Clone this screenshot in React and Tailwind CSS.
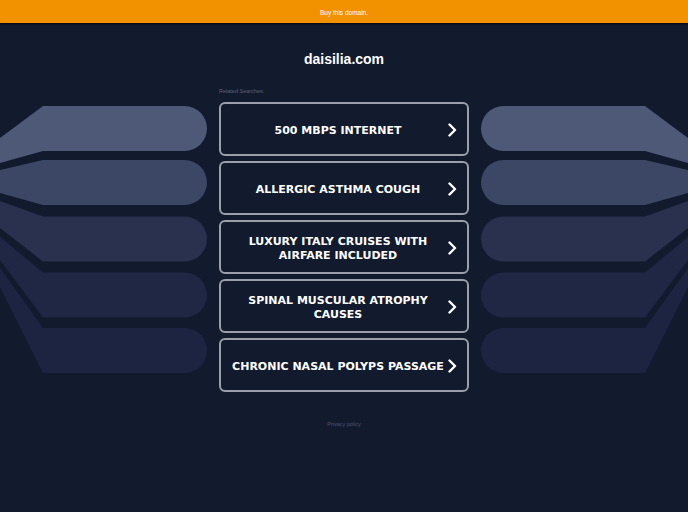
import React from "react";

const items = [
  ["500 MBPS INTERNET"],
  ["ALLERGIC ASTHMA COUGH"],
  ["LUXURY ITALY CRUISES WITH", "AIRFARE INCLUDED"],
  ["SPINAL MUSCULAR ATROPHY", "CAUSES"],
  ["CHRONIC NASAL POLYPS PASSAGE"],
];

const bars = [
  { top: 106, lt: 138, lb: 163, fill: "#4e5877" },
  { top: 160, lt: 170, lb: 193, fill: "#3c4665" },
  { top: 216.5, lt: 201, lb: 228, fill: "#29314f" },
  { top: 272.5, lt: 237, lb: 260, fill: "#1f2745" },
  { top: 328, lt: 268, lb: 287, fill: "#1c2441" },
];

function Side({ flip }) {
  return (
    <svg
      width="219"
      height="305"
      viewBox="0 87 219 305"
      className="shrink-0"
      style={flip ? { transform: "scaleX(-1)" } : undefined}
    >
      {bars.map((b, i) => {
        const bot = b.top + 45;
        return (
          <path
            key={i}
            fill={b.fill}
            d={`M0,${b.lt} L43,${b.top} L184.5,${b.top} A22.5,22.5 0 0 1 184.5,${bot} L43,${bot} L0,${b.lb} Z`}
          />
        );
      })}
    </svg>
  );
}

function Chevron() {
  return (
    <svg width="10" height="14" viewBox="0 0 10 14" className="shrink-0">
      <path d="M2.5 1.5 L8 7 L2.5 12.5" fill="none" stroke="#ffffff" strokeWidth="2.4" strokeLinecap="round" strokeLinejoin="round" />
    </svg>
  );
}

export default function App() {
  return (
    <div className="w-[688px] h-[512px] bg-[#121a2e] overflow-hidden flex flex-col" style={{ fontFamily: '"Liberation Sans", Arial, sans-serif' }}>
      <div className="h-[23px] shrink-0 bg-[#f39200] flex items-center justify-center pt-[2px] text-white text-[6.5px] leading-[8px] shadow-[0_1px_2px_rgba(0,0,0,0.8)]">
        Buy this domain.
      </div>
      <div className="mt-[28px] text-center text-white font-bold text-[14px] leading-[16px]">daisilia.com</div>
      <div className="mt-[20px] flex justify-center">
        <Side />
        <div className="w-[250px] shrink-0 flex flex-col">
          <div className="text-[5.5px] leading-[8px] text-[#5b6478] h-[8px]">Related Searches:</div>
          <div className="mt-[7px] flex flex-col gap-[5px]">
            {items.map((lines, i) => (
              <div
                key={i}
                className="h-[54px] rounded-[6px] border-2 border-[#9a9fa9] flex items-center pl-[8px] pr-[10px]"
              >
                <div
                  className="flex-1 text-center text-white font-bold text-[11px] leading-[13.5px] pt-[3px]"
                  style={{ fontFamily: '"DejaVu Sans", Verdana, sans-serif' }}
                >
                  {lines.map((l, j) => (
                    <div key={j}>{l}</div>
                  ))}
                </div>
                <div className="pt-[2px]">
                  <Chevron />
                </div>
              </div>
            ))}
          </div>
        </div>
        <Side flip />
      </div>
      <div className="mt-[28px] text-center text-[5.5px] leading-[8px] text-[#4e566a]">Privacy policy</div>
    </div>
  );
}
